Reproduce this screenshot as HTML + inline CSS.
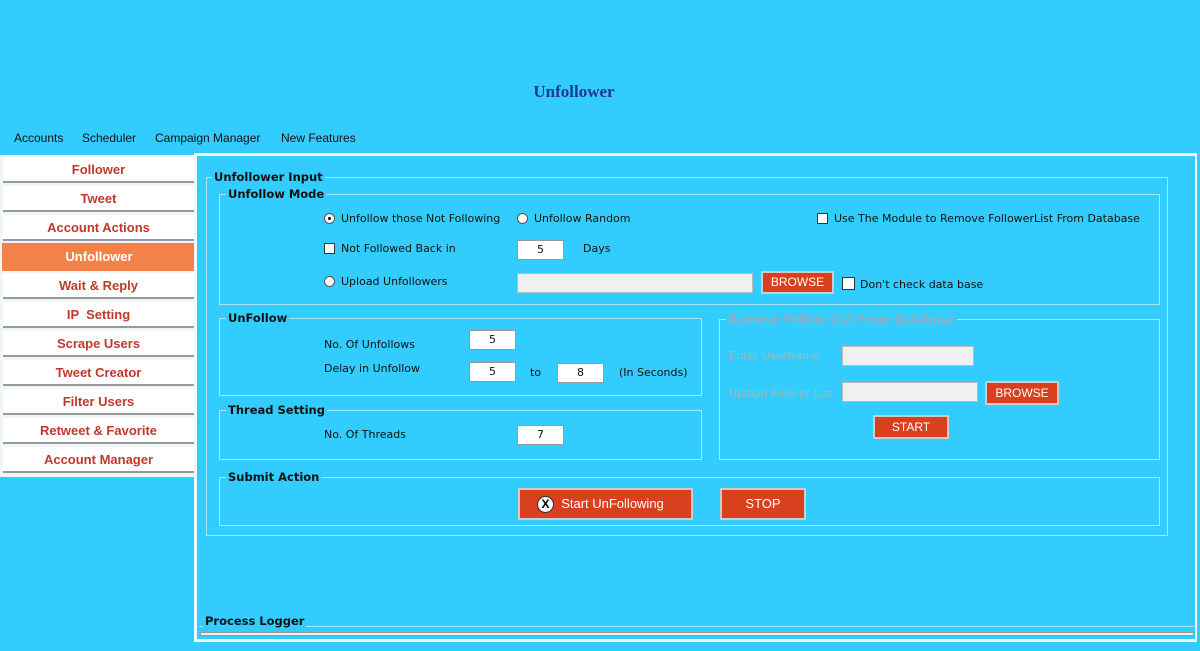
<!DOCTYPE html>
<html><head><meta charset="utf-8"><style>
*{margin:0;padding:0;box-sizing:border-box}
body{width:1200px;height:651px;background:#33ccff;position:relative;overflow:hidden;font-family:"DejaVu Sans","Liberation Sans",sans-serif;font-size:11px;color:#111}
.a{position:absolute}
.title{left:0;width:1148px;top:82px;text-align:center;font:bold 17px "Liberation Serif",serif;color:#1a3a8a}
.menu{top:131px;font-size:12px;font-family:"Liberation Sans",sans-serif;color:#111}
.side{left:0;top:155px;width:196px;height:322px;background:#eef6f8}
.btn{position:absolute;left:3px;width:191px;height:26px;background:#fff;border-bottom:2px solid #999;text-align:center;font:bold 13px "Liberation Sans",sans-serif;color:#c0392b;line-height:25px}
.btn.on{left:2px;width:194px;background:#f5814a;color:#fff;height:28px;line-height:28px;border-bottom:none}
.panel{left:194px;top:153px;width:1003px;height:489px;border:3px solid #f0f8fb;border-right:2px solid #f0f8fb}
.fs{position:absolute;border:1px solid #a6e4f7}
.lg{position:absolute;background:#33ccff;font:bold 11.5px "DejaVu Sans",sans-serif;padding:0 2px;color:#111}
.lbl{position:absolute;font-size:11px}
.in{position:absolute;background:#fff;border:1px solid #999;text-align:center;font-size:11px;line-height:18px}
.gr{position:absolute;background:#f0f0f0;border:1px solid #bbb}
.ob{position:absolute;background:#d9401e;color:#fff;border:2px solid #ccc;font:12px "Liberation Sans",sans-serif;text-align:center}
.rd{position:absolute;width:11px;height:11px;border:1px solid #555;border-radius:50%;background:#fff}
.cb{position:absolute;width:11px;height:11px;border:1px solid #333;background:#fff}
</style></head><body>
<div class="a title">Unfollower</div>
<div class="a menu" style="left:14px">Accounts</div>
<div class="a menu" style="left:82px">Scheduler</div>
<div class="a menu" style="left:155px">Campaign Manager</div>
<div class="a menu" style="left:281px">New Features</div>
<div class="a side"></div>
<div class="btn" style="top:157px">Follower</div>
<div class="btn" style="top:186px">Tweet</div>
<div class="btn" style="top:215px">Account Actions</div>
<div class="btn on" style="top:243px">Unfollower</div>
<div class="btn" style="top:273px">Wait &amp; Reply</div>
<div class="btn" style="top:302px">IP &nbsp;Setting</div>
<div class="btn" style="top:331px">Scrape Users</div>
<div class="btn" style="top:360px">Tweet Creator</div>
<div class="btn" style="top:389px">Filter Users</div>
<div class="btn" style="top:418px">Retweet &amp; Favorite</div>
<div class="btn" style="top:447px">Account Manager</div>
<div class="a panel"></div>

<div class="fs" style="left:206px;top:177px;width:962px;height:359px"></div><div class="lg" style="left:212px;top:170px">Unfollower Input</div>
<div class="fs" style="left:219px;top:194px;width:941px;height:111px"></div><div class="lg" style="left:226px;top:187px">Unfollow Mode</div>
<div class="rd" style="left:324px;top:213px"><div style="width:3px;height:3px;background:#000;border-radius:50%;margin:3px"></div></div>
<div class="lbl" style="left:341px;top:212px">Unfollow those Not Following</div>
<div class="rd" style="left:517px;top:213px"></div><div class="lbl" style="left:534px;top:212px">Unfollow Random</div>
<div class="cb" style="left:817px;top:213px"></div><div class="lbl" style="left:834px;top:212px">Use The Module to Remove FollowerList From Database</div>
<div class="cb" style="left:324px;top:243px"></div><div class="lbl" style="left:341px;top:242px">Not Followed Back in</div>
<div class="in" style="left:517px;top:240px;width:47px;height:20px">5</div><div class="lbl" style="left:583px;top:242px">Days</div>
<div class="rd" style="left:324px;top:276px"></div><div class="lbl" style="left:341px;top:275px">Upload Unfollowers</div>
<div class="gr" style="left:517px;top:273px;width:236px;height:20px"></div>
<div class="ob" style="left:761px;top:271px;width:73px;height:23px;line-height:19px">BROWSE</div>
<div class="cb" style="left:842px;top:277px;width:13px;height:13px"></div><div class="lbl" style="left:860px;top:278px">Don't check data base</div>

<div class="fs" style="left:219px;top:318px;width:483px;height:78px"></div><div class="lg" style="left:226px;top:311px">UnFollow</div>
<div class="lbl" style="left:324px;top:338px">No. Of Unfollows</div>
<div class="in" style="left:469px;top:330px;width:47px;height:20px">5</div>
<div class="lbl" style="left:324px;top:362px">Delay in Unfollow</div>
<div class="in" style="left:469px;top:362px;width:47px;height:20px">5</div>
<div class="lbl" style="left:530px;top:366px">to</div>
<div class="in" style="left:557px;top:363px;width:47px;height:20px">8</div>
<div class="lbl" style="left:619px;top:366px">(In Seconds)</div>

<div class="fs" style="left:219px;top:410px;width:483px;height:50px"></div><div class="lg" style="left:226px;top:403px">Thread Setting</div>
<div class="lbl" style="left:324px;top:428px">No. Of Threads</div>
<div class="in" style="left:517px;top:425px;width:47px;height:20px">7</div>

<div class="fs" style="left:719px;top:319px;width:441px;height:141px"></div><div class="lg" style="left:726px;top:312px;color:#9ab">Remove Follow List From Database</div>
<div class="lbl" style="left:729px;top:349px;color:#9bb">Enter UserName</div>
<div class="gr" style="left:842px;top:346px;width:132px;height:20px"></div>
<div class="lbl" style="left:729px;top:387px;color:#9bb">Upload Follwer List</div>
<div class="gr" style="left:842px;top:382px;width:136px;height:20px"></div>
<div class="ob" style="left:985px;top:381px;width:74px;height:24px;line-height:20px">BROWSE</div>
<div class="ob" style="left:873px;top:415px;width:76px;height:24px;line-height:20px">START</div>

<div class="fs" style="left:219px;top:477px;width:941px;height:49px"></div><div class="lg" style="left:226px;top:470px">Submit Action</div>
<div class="ob" style="left:518px;top:488px;width:175px;height:32px;font-size:13px;line-height:28px;padding-left:14px"><span style="position:absolute;left:17px;top:6px;width:17px;height:17px;border-radius:50%;background:#fff;border:1px solid #333;color:#000;font:bold 12px 'Liberation Sans';line-height:15px">X</span>Start UnFollowing</div>
<div class="ob" style="left:720px;top:488px;width:86px;height:32px;font-size:13px;line-height:28px">STOP</div>

<div class="a" style="left:199px;top:626px;width:996px;height:1px;background:#a6e4f7"></div>
<div class="lg" style="left:203px;top:614px">Process Logger</div>
<div class="a" style="left:200px;top:632px;width:994px;height:4px;border:1px solid #999;background:#eee"></div>
</body></html>
